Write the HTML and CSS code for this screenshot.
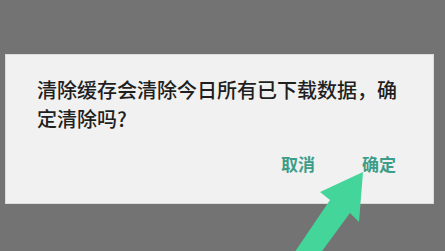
FILE: index.html
```html
<!DOCTYPE html>
<html>
<head>
  <meta charset="UTF-8">
  <title>清除缓存</title>
  <link rel="stylesheet" href="styles.css">
</head>
<body>
  <!-- 确认对话框 -->
  <div class="dialog">
    <p class="message">清除缓存会清除今日所有已下载数据，确定清除吗?</p>
    <div class="actions">
      <button class="btn">取消</button>
      <button class="btn">确定</button>
    </div>
  </div>

  <!-- 指示箭头 -->
  <svg class="arrow" width="445" height="251" viewBox="0 0 445 251">
    <polygon points="363,172 320,192 330,200 288,262 314,262 350,213 359,222" fill="#44d59a"/>
  </svg>
</body>
</html>
```
FILE: styles.css
```css
html, body {
  margin: 0;
  height: 100%;
  overflow: hidden;
}

body {
  background-color: #737373;
  font-family: "Noto Sans CJK SC", "Noto Sans", sans-serif;
  position: relative;
}

/* 对话框 */
.dialog {
  box-sizing: border-box;
  width: 429px;
  height: 150px;
  margin: 54px 0 0 5px;
  padding: 20px 34px 0 31px;
  background-color: #f1f1f1;
  border: 1px solid #dcdcdc;
}

.message {
  margin: 0;
  font-size: 20px;
  line-height: 29px;
  font-weight: 500;
  color: #1f1f1f;
}

.actions {
  display: flex;
  justify-content: flex-end;
  gap: 47px;
  margin-top: 19px;
  padding-right: 3px;
}

.btn {
  padding: 0;
  border: none;
  background: none;
  font-family: inherit;
  font-size: 17px;
  line-height: 24px;
  font-weight: 700;
  color: #3e9d88;
}

.arrow {
  position: absolute;
  left: 0;
  top: 0;
}
```
